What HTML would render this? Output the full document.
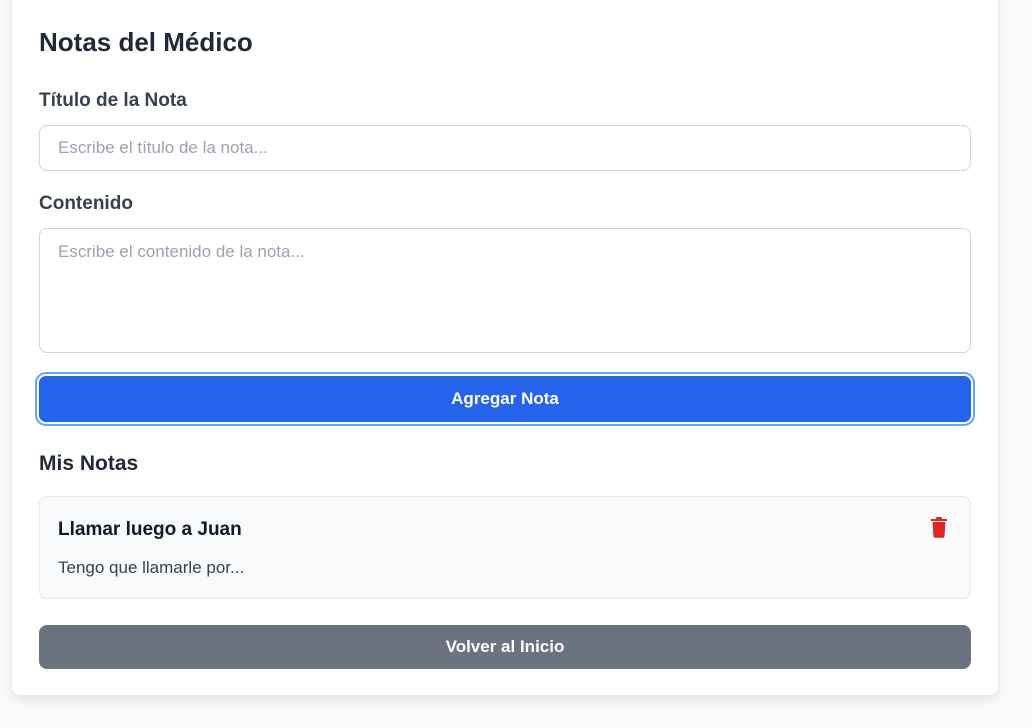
<!DOCTYPE html>
<html><head><meta charset="utf-8"><style>
*{box-sizing:border-box;margin:0;padding:0}
body{width:1032px;height:728px;background:#f9fafb;font-family:"Liberation Sans",sans-serif;color:#1f2937;overflow:hidden;position:relative}
.card{position:absolute;left:12px;top:-20px;width:986px;height:715px;background:#fff;border-radius:8px;box-shadow:0 4px 10px rgba(0,0,0,.1)}
.abs{position:absolute}
h1{position:absolute;left:39px;top:27px;font-size:26px;font-weight:bold;color:#1f2937}
.lbl{position:absolute;left:39px;font-size:19px;color:#374151;font-weight:bold}
.inp{position:absolute;left:39px;width:932px;border:1px solid #d1d5db;border-radius:8px;color:#9ca3af;font-size:17px;padding:0 18px}
.btn{position:absolute;left:39px;width:932px;border-radius:8px;color:#fff;font-weight:bold;font-size:17px;display:flex;align-items:center;justify-content:center}
</style></head><body>
<div class="card"></div>
<h1>Notas del Médico</h1>
<div class="lbl" style="top:90px">Título de la Nota</div>
<div class="inp" style="top:125px;height:46px;line-height:44px">Escribe el título de la nota...</div>
<div class="lbl" style="top:193px">Contenido</div>
<div class="inp" style="top:228px;height:125px;padding-top:13px;line-height:20px">Escribe el contenido de la nota...</div>
<div class="btn" style="top:376px;height:46px;background:#2563eb;box-shadow:0 0 0 2px #fff,0 0 0 4px #60a5fa;border-radius:7px">Agregar Nota</div>
<div class="abs" style="left:39px;top:452px;font-size:21px;font-weight:bold">Mis Notas</div>
<div class="abs" style="left:39px;top:496px;width:932px;height:103px;background:#f9fafb;border:1px solid #e5e7eb;border-radius:8px"></div>
<div class="abs" style="left:58px;top:519px;font-size:19px;font-weight:bold;color:#111827">Llamar luego a Juan</div>
<div class="abs" style="left:58px;top:558px;font-size:17px;color:#374151">Tengo que llamarle por...</div>
<svg class="abs" style="left:931px;top:516px" width="18" height="22" viewBox="0 0 18 22"><rect x="0" y="3" width="16" height="2" fill="#dc2626"/><rect x="5" y="1" width="6" height="3" rx="1" fill="#dc2626"/><path d="M1.5 6h13l-1 14.5a1.5 1.5 0 0 1-1.5 1.2h-8a1.5 1.5 0 0 1-1.5-1.2z" fill="#dc2626"/></svg>
<div class="btn" style="top:625px;height:44px;background:#6b7280">Volver al Inicio</div>
</body></html>
